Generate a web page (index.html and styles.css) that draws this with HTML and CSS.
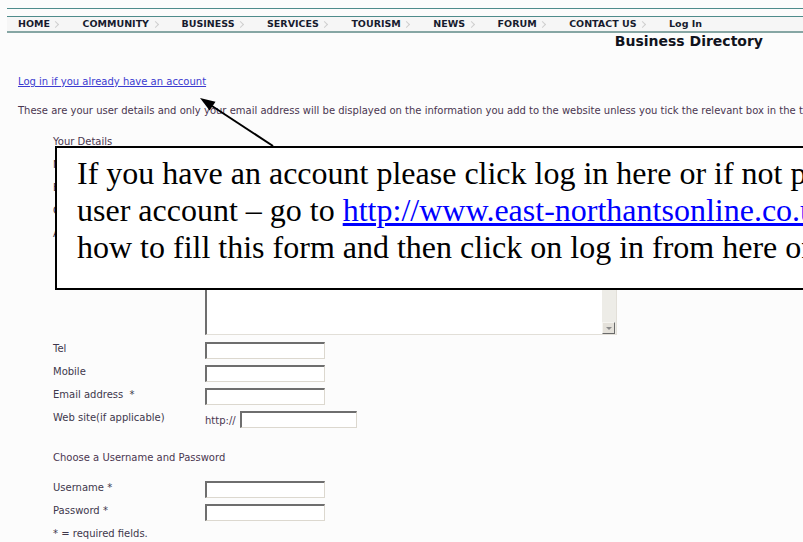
FILE: index.html
```html
<!DOCTYPE html>
<html lang="en">
<head>
<meta charset="utf-8">
<title>Business Directory – Register</title>
<link rel="stylesheet" href="styles.css">
</head>
<body>
<div class="top-rule"></div>
<nav class="main-nav">
  <ul>
    <li><a href="#">HOME</a></li>
    <li><a href="#">COMMUNITY</a></li>
    <li><a href="#">BUSINESS</a></li>
    <li><a href="#">SERVICES</a></li>
    <li><a href="#">TOURISM</a></li>
    <li><a href="#">NEWS</a></li>
    <li><a href="#">FORUM</a></li>
    <li><a href="#">CONTACT US</a></li>
    <li class="last"><a href="#">Log In</a></li>
  </ul>
</nav>
<h1 class="dir-title">Business Directory</h1>

<main class="content">
  <a class="login-link" href="#">Log in if you already have an account</a>
  <p class="intro">These are your user details and only your email address will be displayed on the information you add to the website unless you tick the relevant box in the table below.</p>

  <form class="reg-form">
    <div class="section-title">Your Details</div>
    <div class="row"><label>Name *</label><input type="text"></div>
    <div class="row"><label>Business name *</label><input type="text"></div>
    <div class="row"><label>Contact name</label><input type="text"></div>
    <div class="row row-address">
      <label>Address</label>
      <div class="textbox">
        <textarea></textarea>
        <div class="scroll-track"><span class="scroll-btn"></span></div>
      </div>
    </div>
    <div class="row"><label>Tel</label><input type="text"></div>
    <div class="row"><label>Mobile</label><input type="text"></div>
    <div class="row"><label>Email address &nbsp;*</label><input type="text"></div>
    <div class="row"><label>Web site(if applicable)</label><div class="web-cell"><span class="prefix">http://</span><input class="web-input" type="text"></div></div>

    <div class="section-title section-gap">Choose a Username and Password</div>
    <div class="row row-first"><label>Username *</label><input type="text"></div>
    <div class="row"><label>Password *</label><input type="password"></div>
    <div class="row"><label>* = required fields.</label><div class="btn-cell"><span class="submit-btn"></span></div></div>
  </form>
</main>

<aside class="callout">If you have an account please click log in here or if not please create a<br>user account – go to <a href="#">http://www.east-northantsonline.co.uk</a> for help on<br>how to fill this form and then click on log in from here once done.</aside>

<svg class="pointer" width="803" height="542" viewBox="0 0 803 542" aria-hidden="true">
  <line x1="273" y1="146" x2="212" y2="106" stroke="#000" stroke-width="2"/>
  <polygon points="200,98 215.5,101.8 209.6,110.6" fill="#000"/>
</svg>
</body>
</html>
```

FILE: styles.css
```css
html, body {
  margin: 0;
  padding: 0;
  overflow: hidden;
}

body {
  position: relative;
  width: 803px;
  height: 542px;
  background: #fcfcfc;
  font-family: "DejaVu Sans", Verdana, sans-serif;
  font-size: 10px;
  color: #44384a;
}

/* two teal rules framing the menu */
.top-rule {
  height: 1px;
  margin: 8px 0 0 7px;
  background: #4f8c8c;
}

.main-nav {
  margin: 7px 0 0 7px;
  height: 14px;
  border-top: 1px solid #4f8c8c;
  border-bottom: 2px solid #86a6a4;
  background: #f6f6f6;
}

.main-nav ul {
  display: flex;
  margin: 0;
  padding: 0 0 0 11px;
  list-style: none;
}

.main-nav li {
  display: flex;
  align-items: center;
  height: 14px;
}

.main-nav a {
  font-size: 9.5px;
  font-weight: bold;
  line-height: 14px;
  color: #161b2e;
  text-decoration: none;
}

.main-nav li::after {
  content: "";
  width: 4px;
  height: 4px;
  margin: 1px 24px 0 3.5px;
  border-top: 1px solid #cfcfcf;
  border-right: 1px solid #cfcfcf;
  transform: rotate(45deg);
}

.main-nav li.last::after {
  display: none;
}

.dir-title {
  margin: 0;
  padding-right: 40px;
  text-align: right;
  font-size: 14px;
  line-height: 17px;
  font-weight: bold;
  color: #11131c;
}

.content {
  padding-left: 18px;
}

.login-link {
  display: block;
  margin-top: 26px;
  line-height: 12px;
  color: #3b3bd0;
  text-decoration: underline;
}

.intro {
  margin: 17px 0 0;
  line-height: 12px;
  white-space: nowrap;
  color: #4a3650;
}

.reg-form {
  margin: 13px 0 0 35px;
}

.section-title {
  line-height: 23px;
  height: 23px;
  color: #4a3650;
}

.section-gap {
  margin-top: 17px;
}

.row {
  display: grid;
  grid-template-columns: 152px auto;
  align-items: start;
  height: 23px;
  line-height: 23px;
}

.row-first {
  margin-top: 7px;
}

.row label {
  color: #40384c;
  white-space: nowrap;
}

.row input {
  box-sizing: border-box;
  width: 120px;
  height: 17px;
  margin: 5px 0 0;
  padding: 0 2px;
  background: #fff;
  border-style: solid;
  border-width: 2px 1px 1px 2px;
  border-color: #6e6e6e #dcd8cf #dcd8cf #6e6e6e;
  font: 10px "DejaVu Sans", sans-serif;
}

/* address box with its scrollbar */
.row-address {
  height: 115px;
}

.textbox {
  display: flex;
  width: 412px;
  height: 108px;
  margin-top: 5px;
  box-sizing: border-box;
  border-left: 2px solid #6e6e6e;
  border-top: 2px solid #6e6e6e;
  border-bottom: 1px solid #e2dfd8;
  background: #fff;
}

.textbox textarea {
  flex: 1;
  margin: 0;
  padding: 2px;
  border: 0;
  resize: none;
  background: #fff;
  font: 10px "DejaVu Sans", sans-serif;
}

.scroll-track {
  display: flex;
  align-items: flex-end;
  width: 14px;
  background: #edece7;
  border-right: 1px solid #e2dfd8;
}

.scroll-btn {
  position: relative;
  width: 13px;
  height: 12px;
  box-sizing: border-box;
  background: #e4e1da;
  border-top: 1px solid #f5f4f0;
  border-left: 1px solid #f5f4f0;
  border-right: 1px solid #6a6a6a;
  border-bottom: 1px solid #6a6a6a;
}

.scroll-btn::after {
  content: "";
  position: absolute;
  left: 3px;
  top: 4px;
  border-left: 3px solid transparent;
  border-right: 3px solid transparent;
  border-top: 3px solid #8a8a8a;
}

.web-cell {
  display: flex;
  align-items: flex-start;
}

.prefix {
  margin-top: 9px;
  line-height: 12px;
  color: #4a3650;
}

.row .web-input {
  width: 117px;
  margin-left: 4px;
}

.btn-cell {
  padding-top: 20px;
}

.submit-btn {
  display: block;
  width: 87px;
  height: 10px;
  border-top: 1px solid #d2d2d2;
}

/* note box laid over the form */
.callout {
  position: absolute;
  left: 55px;
  top: 146px;
  width: 1000px;
  padding: 7px 0 22px 20px;
  border: 2px solid #000;
  background: #fff;
  font-family: "Liberation Serif", "Times New Roman", serif;
  font-size: 32px;
  line-height: 37px;
  color: #000;
  white-space: nowrap;
}

.callout a {
  color: #0000ff;
  text-decoration: underline;
}

.pointer {
  position: absolute;
  left: 0;
  top: 0;
  pointer-events: none;
}
```
